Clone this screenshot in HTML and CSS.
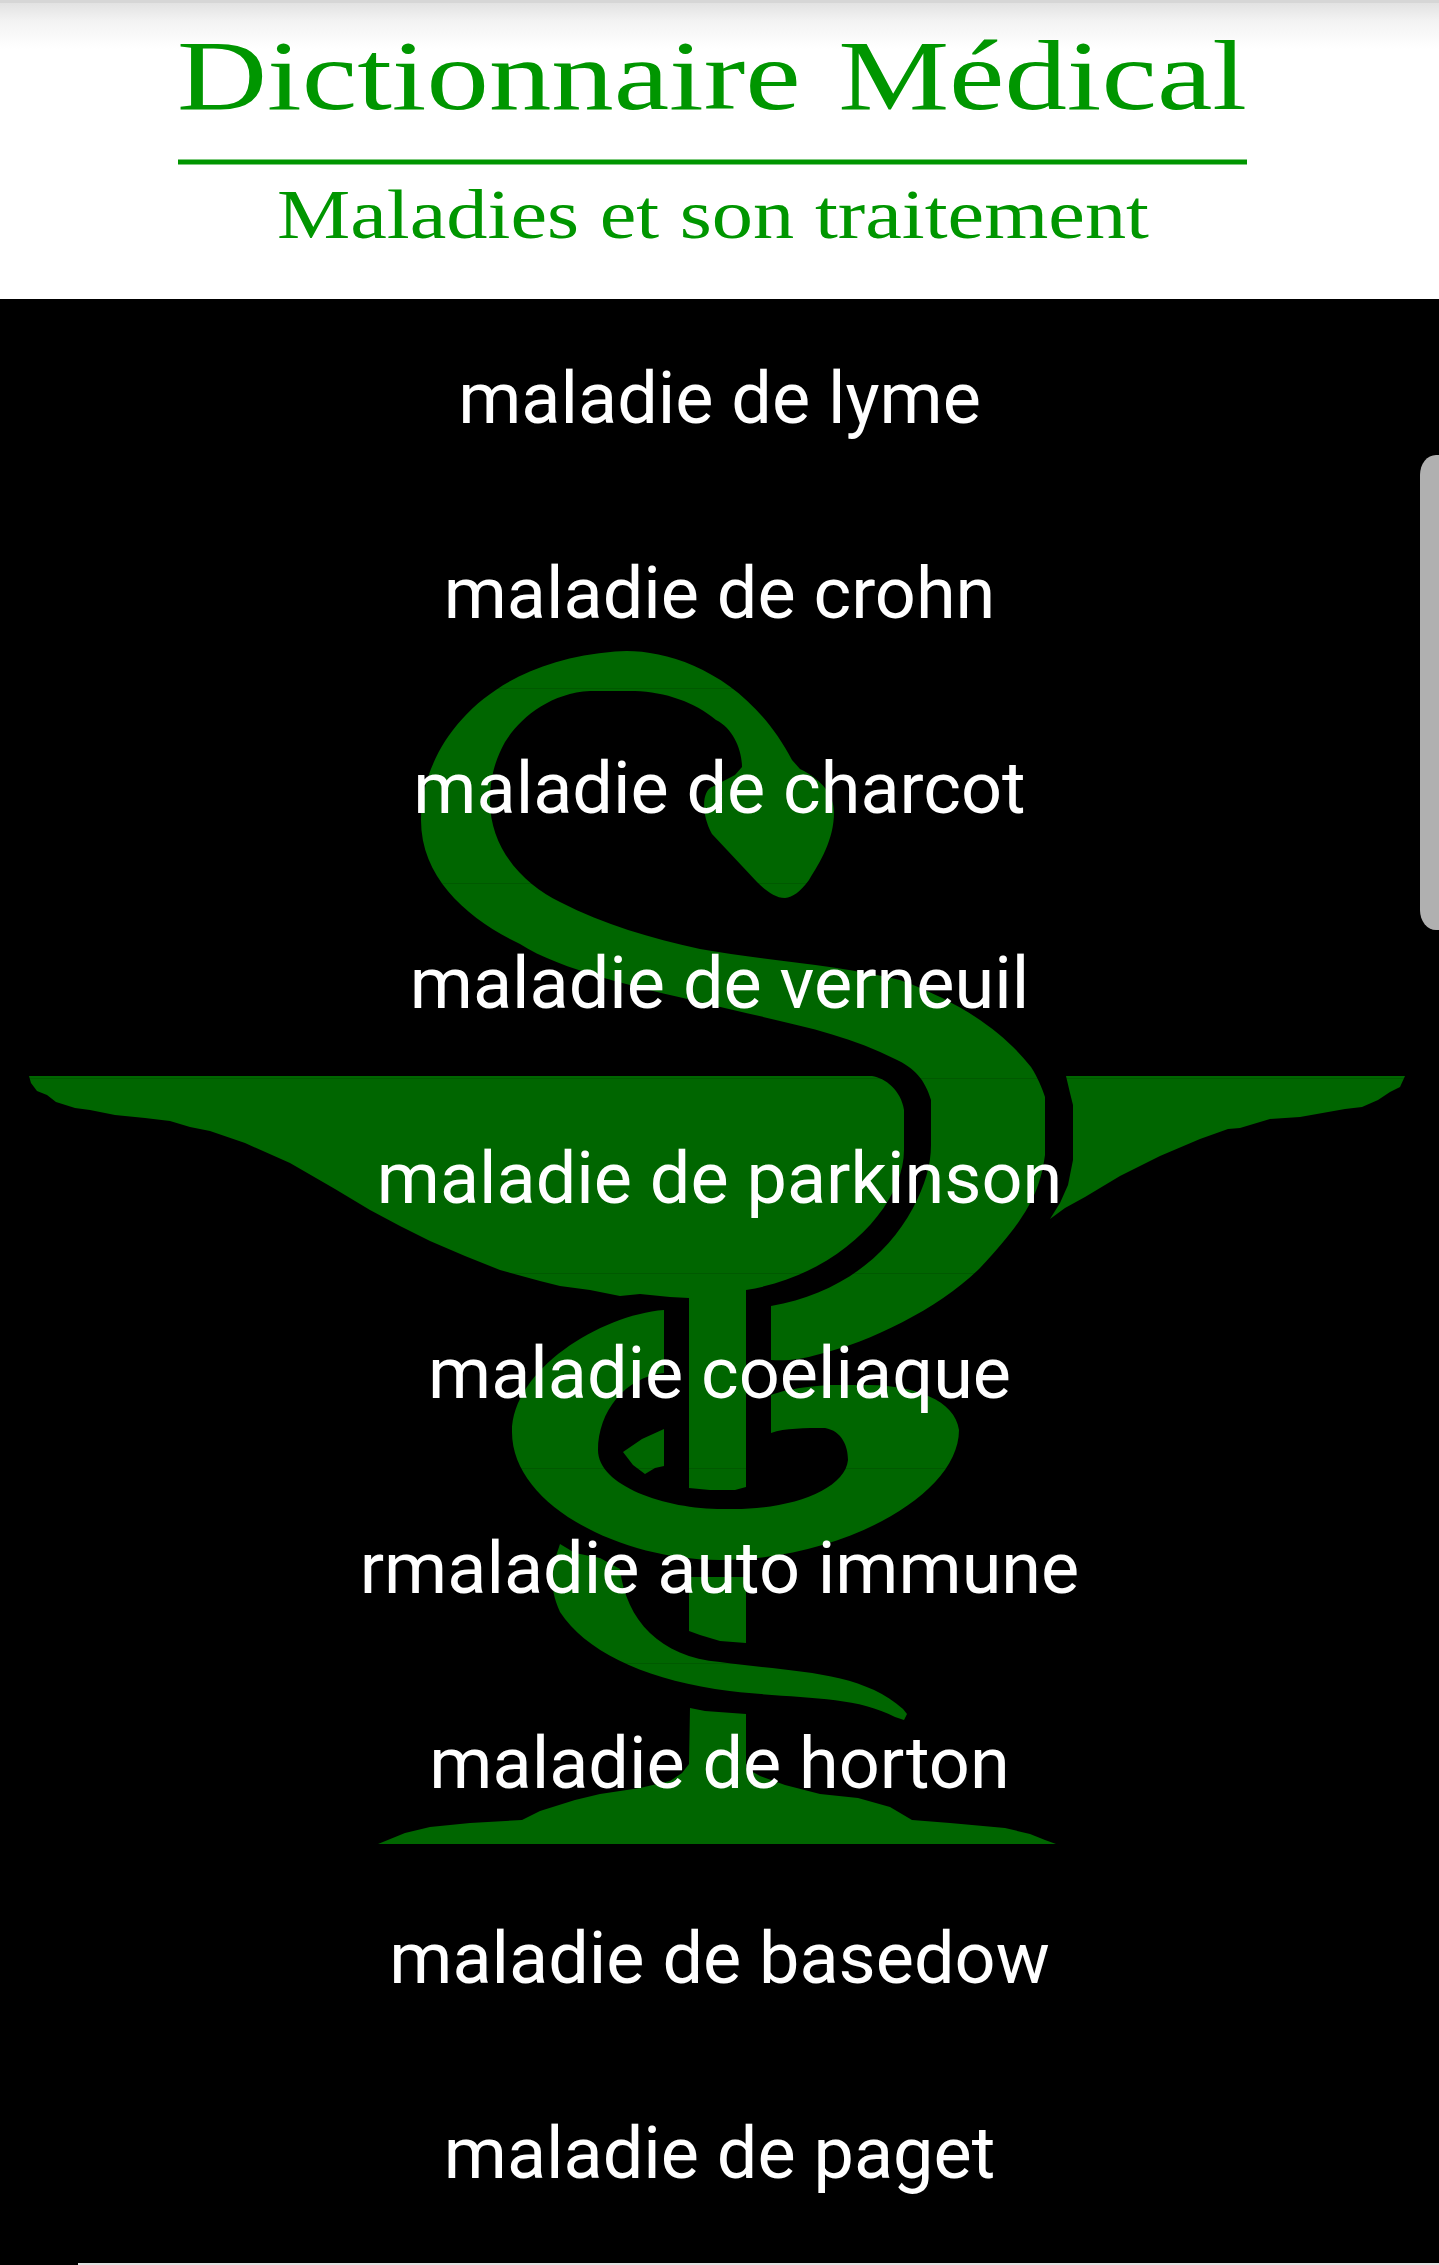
FILE: index.html
```html
<!DOCTYPE html>
<html lang="fr">
<head>
    <meta charset="UTF-8">
    <meta name="viewport" content="width=device-width, initial-scale=1.0">
    <title>Dictionnaire Médical</title>
    <link rel="stylesheet" href="styles.css">
</head>
<body>
    <header class="banner">
        <svg class="banner-title" viewBox="0 0 1439 299" role="img">
            <text class="title" x="177" y="108.5" textLength="1070" lengthAdjust="spacingAndGlyphs">Dictionnaire Médical</text>
            <rect x="178" y="159.5" width="1069" height="5"/>
            <text class="subtitle" x="277" y="238" textLength="872" lengthAdjust="spacingAndGlyphs">Maladies et son traitement</text>
        </svg>
    </header>

    <main class="content">
        <!-- bowl of Hygieia -->
        <svg class="emblem" viewBox="0 299 1439 1966" aria-hidden="true">
            <!-- snake, upper part -->
            <path d="M615 651.5C662 647 745 670 792 760L800 769C822 780 834 795 834 812C834 840 820 862 809 880C800 892 793 897 785 898C775 898 765 890 757 882L712 834C700 812 703 790 712 787L735 775 742 767C742 750 733 728 716 720C695 702 665 692 635 691H590C550 693 520 718 505 742C495 760 490 778 490 801C490 850 525 885 560 902C605 925 650 938 700 949C760 960 840 965 900 980C965 1004 1005 1034 1031 1067C1038 1078 1042 1088 1045 1097V1155C1040 1190 1030 1215 980 1268C940 1308 870 1342 820 1354C800 1360 785 1361 771 1360V1306C835 1295 885 1260 913 1208C925 1185 931 1165 931 1145V1100C925 1080 915 1068 895 1059C840 1030 770 1020 700 1002C640 988 560 970 520 944C470 920 421 880 421 820C421 750 480 662 615 651.5Z"/>
            <!-- bowl and stem -->
            <path d="M29 1076 31 1083 37 1091 47 1095 56 1102 75 1108 90 1110 115 1115 145 1118 170 1121 190 1127 210 1131 245 1143 290 1163 335 1189 370 1210 400 1226 430 1241 465 1256 500 1270 540 1281 560 1286 590 1290 620 1296 640 1294 670 1297 689 1298V1488L710 1490 735 1490 746 1487V1290C840 1275 904 1205 904 1150V1110C901 1090 885 1078 872 1076Z"/>
            <path d="M1066 1076 1070 1093 1073 1105V1160L1068 1185 1060 1203 1050 1219 1065 1208 1085 1197 1120 1176 1160 1156 1200 1139 1228 1129 1240 1128 1270 1119 1300 1117 1345 1109 1362 1107 1378 1100 1390 1092 1400 1087 1405 1076Z"/>
            <!-- coil -->
            <path d="M664 1310C600 1315 512 1370 512 1432C512 1505 620 1560 720 1560C840 1560 959 1496 959 1430C955 1400 915 1386 870 1385H830C800 1387 785 1390 771 1395V1433C785 1428 805 1428 825 1428C842 1431 848 1446 848 1460C845 1490 790 1510 730 1509C670 1511 598 1487 598 1450C598 1412 625 1377 664 1373Z"/>
            <path d="M664 1429 642 1439 623 1452 633 1465 645 1474 655 1468 664 1466Z"/>
            <!-- tail -->
            <path d="M560 1544 575 1553 600 1558 620 1569C626 1620 660 1657 720 1662C790 1672 860 1670 903 1709L907 1714 904 1720 895 1717C850 1693 790 1700 715 1689C640 1677 585 1650 560 1612C550 1590 552 1575 553 1565Z"/>
            <path d="M689 1577 746 1577 746 1643 720 1641 700 1635 689 1631Z"/>
            <!-- foot -->
            <path d="M690 1708 705 1711 746 1714 746 1768 760 1776 785 1785 820 1794 858 1798 890 1807 912 1820 950 1823 1005 1828 1030 1834 1045 1840 1056 1844 378 1844 405 1833 430 1827 470 1823 522 1820 540 1811 575 1800 600 1794 640 1788 670 1781 682 1773 689 1764Z"/>
        </svg>

        <ul class="list">
            <li>maladie de lyme</li>
            <li>maladie de crohn</li>
            <li>maladie de charcot</li>
            <li>maladie de verneuil</li>
            <li>maladie de parkinson</li>
            <li>maladie coeliaque</li>
            <li>rmaladie auto immune</li>
            <li>maladie de horton</li>
            <li>maladie de basedow</li>
            <li>maladie de paget</li>
        </ul>
        <div class="scrollbar"></div>
        <div class="bottom-line"></div>
    </main>
</body>
</html>
```
FILE: styles.css
```css
* {
    box-sizing: border-box;
}

body {
    margin: 0;
    background: #000;
    font-family: Roboto, sans-serif;
}

.banner {
    height: 299px;
    border-top: 3px solid #d6d6d6;
    background: linear-gradient(#e2e2e2, #f3f3f3 18px, #fff 46px);
}

.banner-title {
    display: block;
    width: 100%;
    margin-top: -3px;
    fill: #009600;
    font-family: "Liberation Serif", serif;
}

.title {
    font-size: 100px;
    word-spacing: 5px;
}

.subtitle {
    font-size: 69px;
}

.content {
    position: relative;
    height: 1966px;
    background: #000;
    overflow: hidden;
}

.emblem {
    position: absolute;
    top: 0;
    left: 0;
    width: 100%;
    height: 100%;
    fill: #060;
}

.list {
    position: relative;
    margin: 0;
    padding: 0;
    list-style: none;
    color: #fff;
    font-size: 72px;
    text-align: center;
}

.list li {
    height: 195px;
    line-height: 200px;
    border-bottom: 1px solid rgba(0, 0, 0, 0.12);
}

.scrollbar {
    position: absolute;
    top: 156px;
    right: 0;
    width: 19px;
    height: 475px;
    background: #b0b0b0;
    border-radius: 16px 0 0 16px / 20px 0 0 20px;
}

.bottom-line {
    position: absolute;
    right: 0;
    bottom: 0;
    left: 78px;
    height: 2px;
    background: #e0e0e0;
}
```
